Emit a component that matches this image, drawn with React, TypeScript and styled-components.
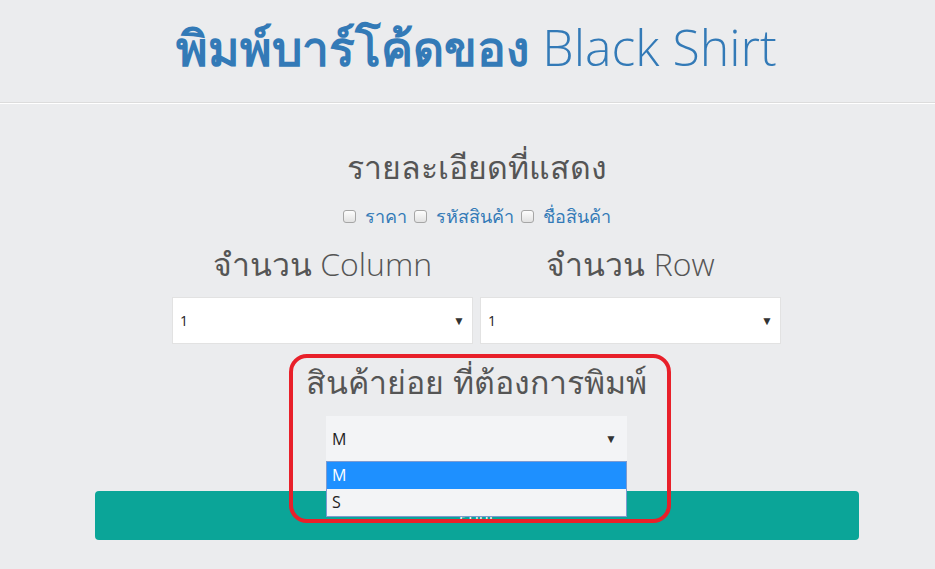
import React from 'react'
import styled, { createGlobalStyle } from 'styled-components'

const GlobalStyle = createGlobalStyle`
  html, body {
    margin: 0;
    padding: 0;
    background: #ebecee;
  }
  body {
    font-family: "Open Sans", "Noto Sans", sans-serif;
    color: #555;
  }
`

const Header = styled.header`
  height: 102px;
  padding-left: 18px;
  border-bottom: 1px solid #dcdcdc;
  box-shadow: 0 1px 0 #fff;
  display: flex;
  align-items: center;
  justify-content: center;
`

const Title = styled.h1`
  margin: 0;
  font-size: 50px;
  line-height: 1;
  color: #337ab7;
  font-weight: 400;
  padding-bottom: 8px;
`

const Thai = styled.span`
  font-size: 48px;
  font-weight: 600;
`

const Light = styled.span`
  font-weight: 300;
`

const Content = styled.div`
  padding-left: 18px;
`

const Main = styled.main`
  width: 764px;
  margin: 0 auto;
  padding-top: 42px;
  display: flex;
  flex-direction: column;
  align-items: center;
`

const Heading = styled.h2`
  margin: 0;
  font-size: 32px;
  line-height: 44px;
  font-weight: 400;
  color: #555;
  text-align: center;
`

const CheckRow = styled.div`
  display: flex;
  align-items: center;
  gap: 7px;
  margin-top: 13px;
  font-size: 18px;
  color: #337ab7;
`

const CheckLabel = styled.label`
  display: flex;
  align-items: center;
  gap: 9px;
`

const Box = styled.span`
  box-sizing: border-box;
  width: 13px;
  height: 13px;
  border: 1px solid #a6a6a6;
  border-radius: 3px;
  background: linear-gradient(#fdfdfd, #e2e2e2);
`

const Columns = styled.div`
  display: grid;
  grid-template-columns: 301px 301px;
  column-gap: 7px;
  margin-top: 11px;
`

const Column = styled.div`
  display: flex;
  flex-direction: column;
  align-items: center;
  gap: 11px;
`

const SelectBox = styled.div<{ $bg?: string }>`
  box-sizing: border-box;
  width: 301px;
  height: ${p => (p.$bg ? 45 : 47)}px;
  background: ${p => p.$bg ?? '#fff'};
  border: 1px solid ${p => (p.$bg ? 'transparent' : '#e2e2e2')};
  display: flex;
  align-items: center;
  justify-content: space-between;
  padding: 0 ${p => (p.$bg ? 9 : 7)}px 0 ${p => (p.$bg ? 5 : 7)}px;
  font-size: ${p => (p.$bg ? 16 : 14)}px;
  color: #222;
`

const Arrow = styled.span`
  font-size: 12px;
  color: #333;
`

const SubSection = styled.div`
  position: relative;
  display: flex;
  flex-direction: column;
  align-items: center;
  margin-top: 16px;
`

const SelectWrap = styled.div`
  position: relative;
  margin-top: 12px;
`

const Options = styled.ul`
  position: absolute;
  top: 100%;
  left: 0;
  z-index: 2;
  margin: 0;
  padding: 0;
  list-style: none;
  width: 301px;
  box-sizing: border-box;
  border: 1px solid #7c9bd1;
  background: #f3f4f6;
  font-size: 16px;
  color: #222;
`

const Option = styled.li<{ $active?: boolean }>`
  height: 27px;
  line-height: 27px;
  padding-left: 5px;
  background: ${p => (p.$active ? '#1e90ff' : 'transparent')};
  color: ${p => (p.$active ? '#fff' : '#222')};
`

const Annotation = styled.div`
  position: absolute;
  left: calc(50% - 188px);
  top: -6px;
  width: 382px;
  height: 169px;
  box-sizing: border-box;
  border: 4px solid #e8202a;
  border-radius: 18px;
  z-index: 3;
  pointer-events: none;
`

const PrintButton = styled.button`
  width: 764px;
  height: 49px;
  margin-top: 30px;
  border: none;
  border-radius: 4px;
  background: #0ba598;
  color: #fff;
  font-family: "Open Sans", sans-serif;
  font-size: 16px;
`

export default function App() {
  return (
    <>
      <GlobalStyle />
      <Header>
        <Title>
          <Thai>พิมพ์บาร์โค้ดของ</Thai> <Light>Black Shirt</Light>
        </Title>
      </Header>
      <Content>
        <Main>
          <Heading>รายละเอียดที่แสดง</Heading>
          <CheckRow>
            <CheckLabel><Box />ราคา</CheckLabel>
            <CheckLabel><Box />รหัสสินค้า</CheckLabel>
            <CheckLabel><Box />ชื่อสินค้า</CheckLabel>
          </CheckRow>
          <Columns>
            <Column>
              <Heading>จำนวน <Light>Column</Light></Heading>
              <SelectBox>1<Arrow>▼</Arrow></SelectBox>
            </Column>
            <Column>
              <Heading>จำนวน <Light>Row</Light></Heading>
              <SelectBox>1<Arrow>▼</Arrow></SelectBox>
            </Column>
          </Columns>
          <SubSection>
            <Heading>สินค้าย่อย ที่ต้องการพิมพ์</Heading>
            <SelectWrap>
              <SelectBox $bg="#f3f4f6">M<Arrow>▼</Arrow></SelectBox>
              <Options>
                <Option $active>M</Option>
                <Option>S</Option>
              </Options>
            </SelectWrap>
            <Annotation />
          </SubSection>
          <PrintButton>Print</PrintButton>
        </Main>
      </Content>
    </>
  )
}
